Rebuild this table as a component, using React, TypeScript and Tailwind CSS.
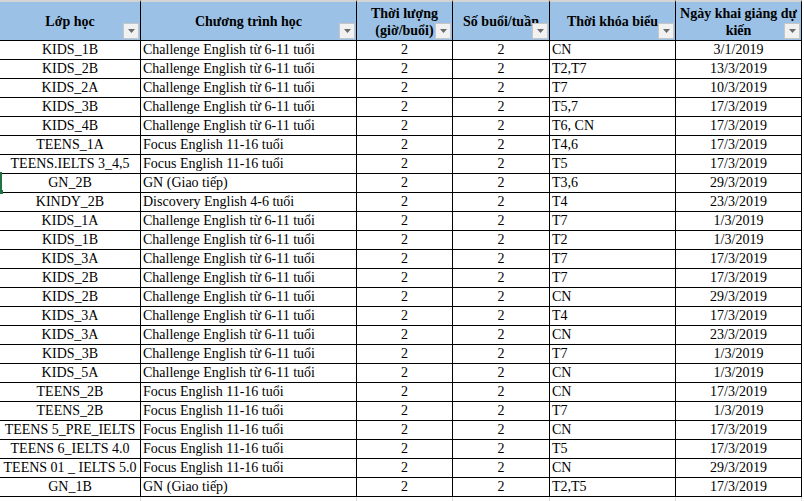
import React from "react";

const CH = "Challenge English từ 6-11 tuổi";
const FO = "Focus English 11-16 tuổi";
const GN = "GN (Giao tiếp)";

const rows: [string, string, string, string][] = [
  ["KIDS_1B", CH, "CN", "3/1/2019"],
  ["KIDS_2B", CH, "T2,T7", "13/3/2019"],
  ["KIDS_2A", CH, "T7", "10/3/2019"],
  ["KIDS_3B", CH, "T5,7", "17/3/2019"],
  ["KIDS_4B", CH, "T6, CN", "17/3/2019"],
  ["TEENS_1A", FO, "T4,6", "17/3/2019"],
  ["TEENS.IELTS 3_4,5", FO, "T5", "17/3/2019"],
  ["GN_2B", GN, "T3,6", "29/3/2019"],
  ["KINDY_2B", "Discovery English 4-6 tuổi", "T4", "23/3/2019"],
  ["KIDS_1A", CH, "T7", "1/3/2019"],
  ["KIDS_1B", CH, "T2", "1/3/2019"],
  ["KIDS_3A", CH, "T7", "17/3/2019"],
  ["KIDS_2B", CH, "T7", "17/3/2019"],
  ["KIDS_2B", CH, "CN", "29/3/2019"],
  ["KIDS_3A", CH, "T4", "17/3/2019"],
  ["KIDS_3A", CH, "CN", "23/3/2019"],
  ["KIDS_3B", CH, "T7", "1/3/2019"],
  ["KIDS_5A", CH, "CN", "1/3/2019"],
  ["TEENS_2B", FO, "CN", "17/3/2019"],
  ["TEENS_2B", FO, "T7", "1/3/2019"],
  ["TEENS 5_PRE_IELTS", FO, "CN", "17/3/2019"],
  ["TEENS 6_IELTS 4.0", FO, "T5", "17/3/2019"],
  ["TEENS 01 _ IELTS 5.0", FO, "CN", "29/3/2019"],
  ["GN_1B", GN, "T2,T5", "17/3/2019"],
];

const headers = [
  "Lớp học",
  "Chương trình học",
  "Thời lượng (giờ/buổi)",
  "Số buổi/tuần",
  "Thời khóa biểu",
  "Ngày khai giảng dự kiến",
];

function FilterButton() {
  return (
    <div className="absolute right-[1px] bottom-[1px] w-[16px] h-[16px] bg-[#f1f1f1] border border-[#c6c6c6] flex items-center justify-center">
      <svg width="7" height="4" viewBox="0 0 7 4">
        <path d="M0 0 L7 0 L3.5 4 Z" fill="#6b6b6b" />
      </svg>
    </div>
  );
}

const cols = "grid grid-cols-[141px_216px_96px_97px_126px_126px]";

export default function App() {
  return (
    <div
      className="relative w-[804px] h-[501px] overflow-hidden bg-white text-black text-[14px]"
      style={{ fontFamily: '"Liberation Serif", "Times New Roman", serif' }}
    >
      {/* header */}
      <div className={cols}>
        {headers.map((h, i) => (
          <div
            key={i}
            className="relative h-[41px] border-t-2 border-t-[#d4d4d4] border-b border-b-black border-r border-r-black bg-[#9bc2e6] flex items-center justify-center text-center font-bold leading-[17px] px-[2px] pt-[1px]"
          >
            <span>{h}</span>
            <FilterButton />
          </div>
        ))}
      </div>

      {/* body */}
      {rows.map((r, i) => (
        <div key={i} className={cols}>
          <div className="h-[19px] border-b border-r border-black leading-[18px] text-center whitespace-nowrap overflow-hidden flex justify-center">
            <span>{r[0]}</span>
          </div>
          <div className="h-[19px] border-b border-r border-black leading-[18px] pl-[2px] whitespace-nowrap overflow-hidden">
            {r[1]}
          </div>
          <div className="h-[19px] border-b border-r border-black leading-[18px] text-center">2</div>
          <div className="h-[19px] border-b border-r border-black leading-[18px] text-center">2</div>
          <div className="h-[19px] border-b border-r border-black leading-[18px] pl-[2px] whitespace-nowrap">
            {r[2]}
          </div>
          <div className="h-[19px] border-b border-r border-black leading-[18px] text-center">{r[3]}</div>
        </div>
      ))}

      {/* empty grid below */}
      <div className={cols}>
        {headers.map((_, i) => (
          <div key={i} className="h-[6px] border-r border-[#dadada]" />
        ))}
      </div>

      {/* active cell marker */}
      <div className="absolute left-0 top-[172px] w-[2px] h-[20px] bg-[#217346]" />
      <div className="absolute left-0 top-[190px] w-[3px] h-[4px] bg-[#217346]" />
    </div>
  );
}
